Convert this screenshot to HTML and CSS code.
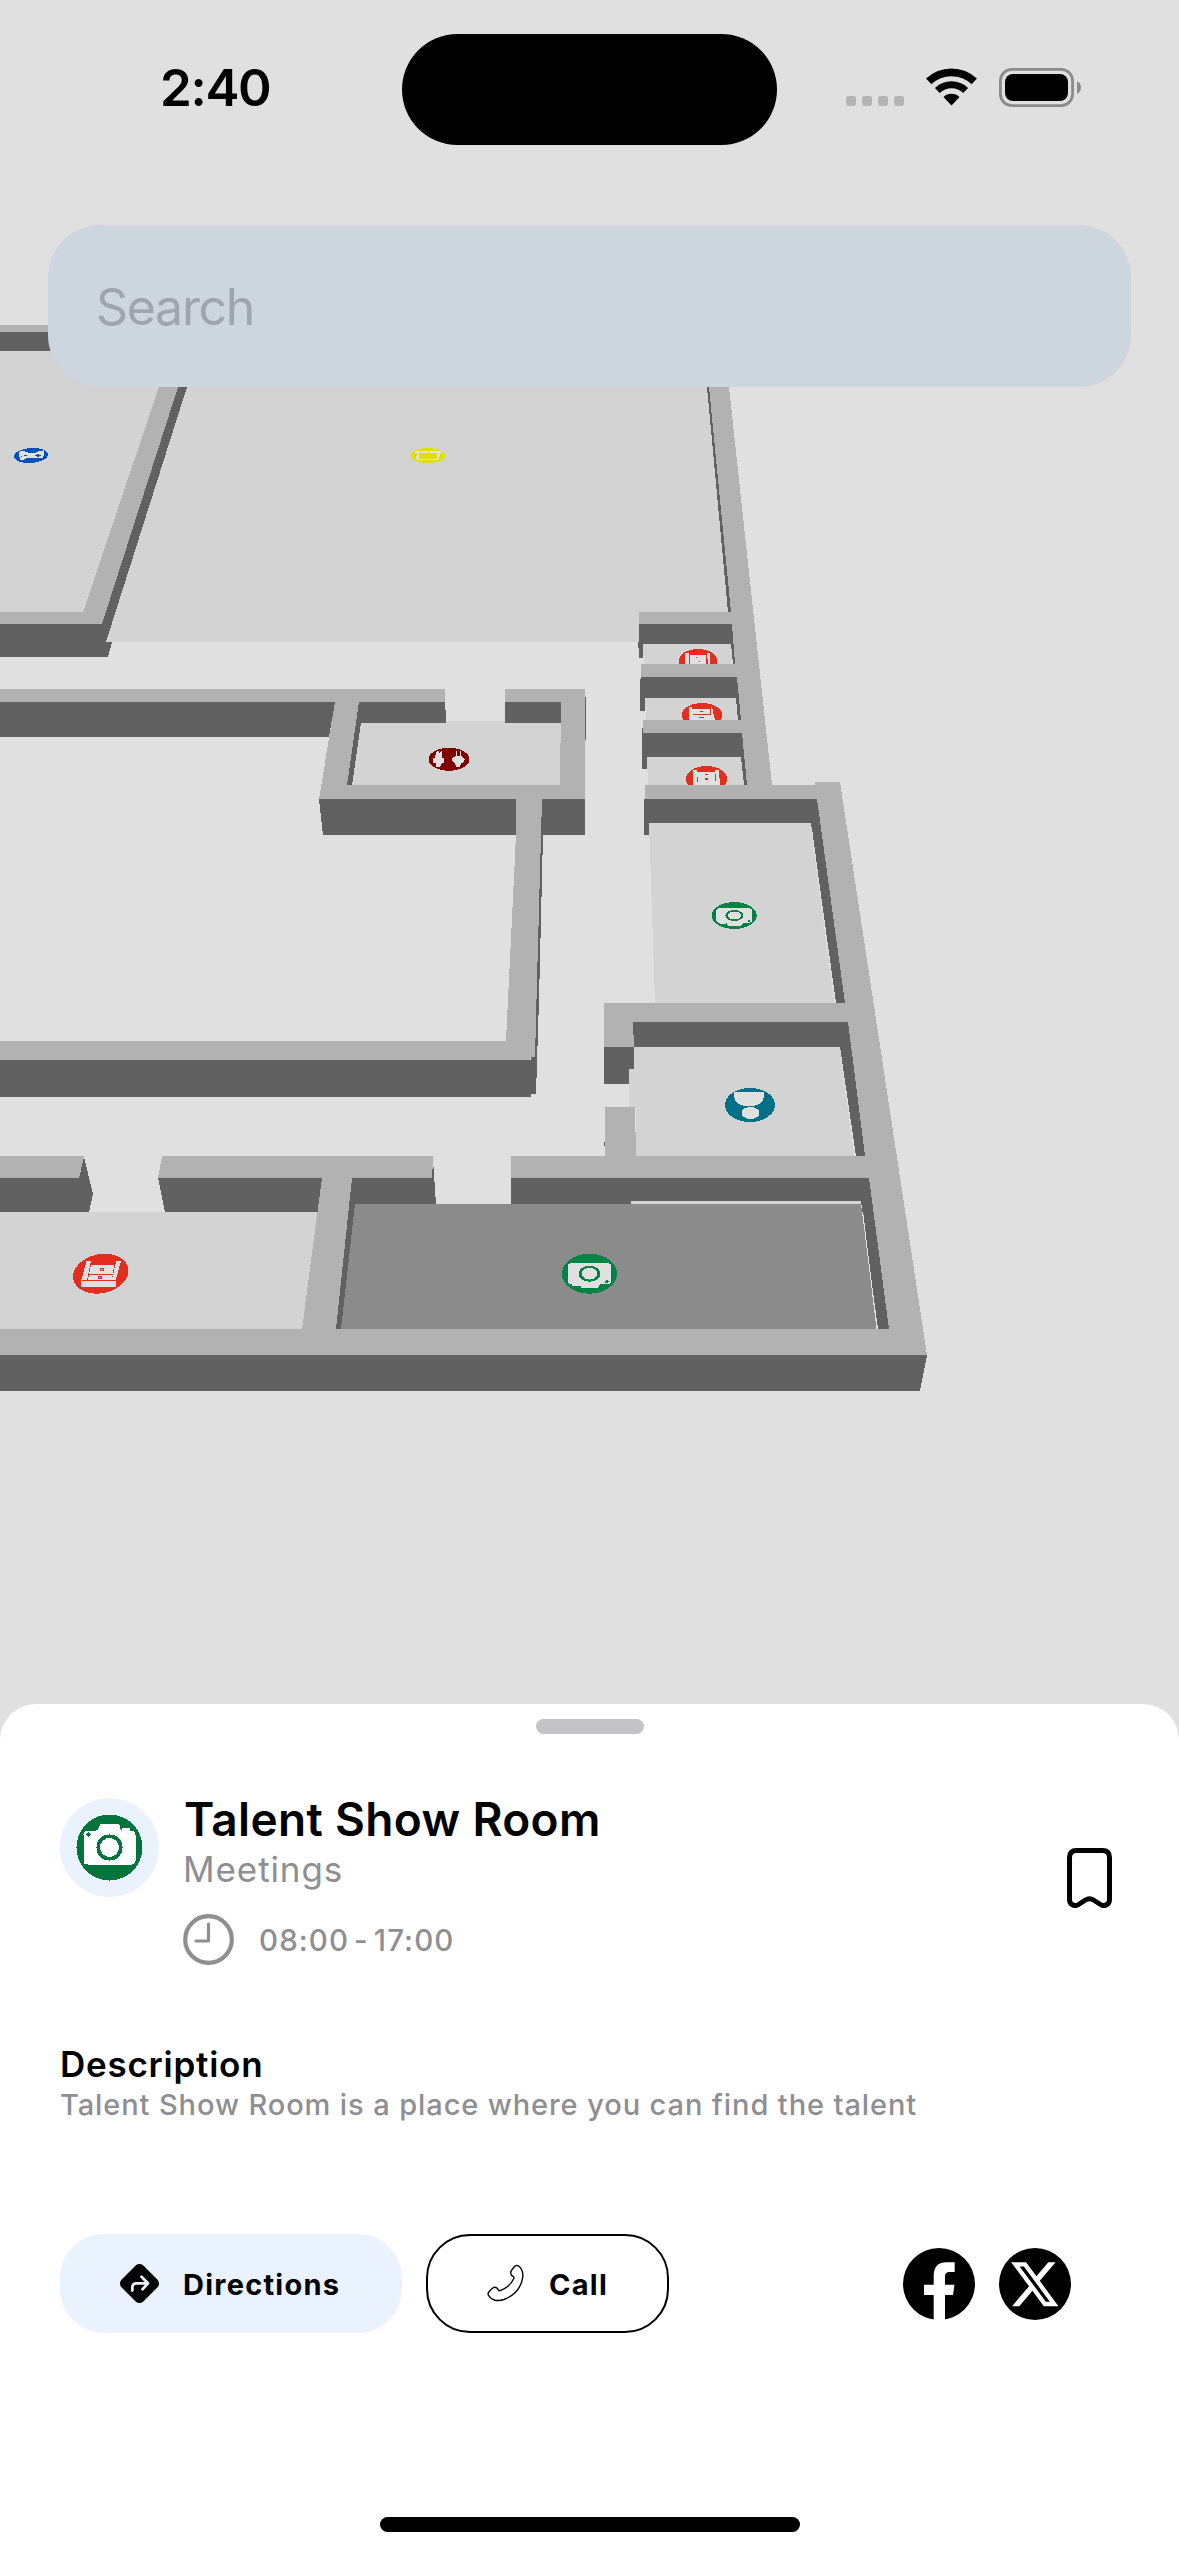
FILE: index.html
```
<!DOCTYPE html>
<html lang="en">
<head>
<meta charset="utf-8">
<title>Talent Show Room</title>
<link rel="stylesheet" href="styles.css">
</head>
<body>
<main class="screen">

  <svg class="map" viewBox="0 0 1179 1740" aria-label="Floor map">
    <defs>
      <g id="camera">
        <path class="glyph" d="M-26-13Q-26-17-22-17H-13L-9.600-24H9.600L12-17V-20H21V-17H22Q26-17 26-13V13Q26 17 22 17H-22Q-26 17-26 13Z"/>
        <circle class="lens" r="11.300"/>
        <circle class="dot" cx="-21" cy="-13" r="2.200"/>
      </g>
      <clipPath id="clip1"><rect x="640" y="640" width="100" height="24"/></clipPath>
      <clipPath id="clip2"><rect x="640" y="690" width="100" height="30"/></clipPath>
      <clipPath id="clip3"><rect x="640" y="750" width="110" height="35"/></clipPath>
    </defs>

    <!-- room floors -->
    <g class="floor">
      <path d="M0 351H172L83 635H0Z"/>
      <path d="M187 387H707L731 612H640V642H106Z"/>
      <path d="M361 723H446V721H505V723H561V786H352Z"/>
      <path d="M643 644H732V664H644Z"/>
      <path d="M645 698H737L739 720H646Z"/>
      <path d="M647 757H741L744 785H648Z"/>
      <path d="M649 823H811L835 1003H655Z"/>
      <path d="M634 1047H840L855 1156H636V1107H629V1068H634Z"/>
      <path d="M631 1201H861V1205H631Z"/>
      <path d="M0 1212H318L302 1329H0Z"/>
    </g>
    <path class="floor-active" d="M354 1204H861L877 1329H341Z"/>

    <!-- wall faces -->
    <g class="side">
      <path d="M0 332H90V351H0Z"/>
      <path d="M178 387H187L106 642H112L108 657H0V624H102Z"/>
      <path d="M707 387H710L731 612H728Z"/>
      <path d="M639 624H733L736 664H733L731 644H643V658H639V648H638V642H639Z"/>
      <path d="M640 679H641V677H737L741 720H738L736 698H645V711H640Z"/>
      <path d="M642 728H643V733H742L747 785H744L741 757H647V769H642Z"/>
      <path d="M644 799H817L845 1003H836L811 823H649V835H644Z"/>
      <path d="M0 702H335L329 737H0Z"/>
      <path d="M359 702H443V696H445L446 723H361L352 785H346Z"/>
      <path d="M505 702H562V723H505Z"/>
      <path d="M584 697H586V740H584Z"/>
      <path d="M319 799H585V835H323Z"/>
      <path d="M541 835H543L539 1000L536 1094H531V1097H0V1060H531Z"/>
      <path d="M604 1047H633V1022H848L865 1156H856L840 1047H634V1069H629V1084H604Z"/>
      <path d="M604 1142H606V1146H604Z"/>
      <path d="M0 1178H79L84 1157L93 1194L89 1212H0Z"/>
      <path d="M158 1178H322L318 1212H165Z"/>
      <path d="M352 1178H432L433 1160L436 1204H355L341 1329H335Z"/>
      <path d="M511 1178H869L889 1329H878L861 1201H631V1204H511Z"/>
      <path d="M0 1355H927L920 1391H0Z"/>
    </g>

    <!-- wall tops -->
    <g class="top">
      <path d="M0 325H90V332H0Z"/>
      <path d="M159 387H178L102 624H0V612H83Z"/>
      <path d="M709 387H729L772 785H815V782H840L927 1355H0V1329H302L322 1178H158L162 1156H433L432 1178H352L336 1329H889L869 1178H511V1156H605V1107H635L636 1156H865L848 1022H633L634 1047H604V1003H845L817 799H645V785H747L742 733H643V720H741L737 677H641V664H735L732 624H639V612H731Z"/>
      <path d="M0 689H445V702H359L347 785H560L561 702H505V689H585V799H542L537 980L535 1057H530V1060H0V1041H506L516 835V799H319L335 702H0Z"/>
      <path d="M0 1156H84L79 1178H0Z"/>
    </g>
    <path class="seam" d="M812 832L835 1003M841 1058L855 1156M863 1215L877 1329"/>

    <!-- room markers -->
    <ellipse class="blue" cx="31" cy="455.500" rx="17" ry="7.500" transform="rotate(-4 31 455.500)"/>
    <path class="glyph" d="M19.500 451.500Q24 450.500 28 452.500Q33 454 37 452Q42 450 44.500 450.500Q45 454 42.500 457.500Q40 459 36 458H27Q23 461 20.500 460Q18.500 456 19.500 451.500Z"/>
    <path class="blue" d="M24 455H27V456H22V457H21V456H24ZM37 454H39V455H41V456H39V457H37V456H35V455H37Z"/>

    <ellipse class="yellow" cx="428" cy="455.500" rx="17" ry="7.500"/>
    <path class="glyph" d="M415 451H442V453H440L439 460H416L417 453H415Z"/>
    <path class="yellow" d="M419 453H437V459H419ZM428 451H429V453H428Z"/>

    <ellipse class="maroon" cx="449" cy="759.300" rx="20.500" ry="11.500"/>
    <path class="glyph" d="M437 751H439V754L441 751H442V758H444V763H442L440 767H436V763H433V758H435L436 753ZM456 751H457V756H460V751H461V756L465 759L464 762L461 763L460 767H456L455 763L452 761V758L456 756Z"/>

    <g clip-path="url(#clip1)">
      <ellipse class="red" cx="698" cy="661" rx="19.300" ry="12"/>
      <path class="glyph" d="M685 653H689V664H685ZM690 655H706V664H690ZM707 653H710V664H708Z"/>
      <path class="red" d="M696 657H697V658H696ZM699 661H700V662H699Z"/>
    </g>
    <g clip-path="url(#clip2)">
      <ellipse class="red" cx="702" cy="715" rx="20" ry="12"/>
      <path class="glyph" d="M689 707H712L715 720H689Z"/>
      <path class="red" d="M692 707H711V709H692ZM710 709H711V715H710ZM693 714H711V715H693ZM700 711H703V712H700ZM699 717H704V718H699Z"/>
    </g>
    <g clip-path="url(#clip3)">
      <ellipse class="red" cx="706.500" cy="779" rx="20.500" ry="13"/>
      <path class="glyph" d="M693 770H697V772H715V770H719L720 785H693Z"/>
      <path class="red" d="M697 777H698V782H697ZM715 774H716V781H715ZM705 774H708V775H705ZM705 778H708V780H705Z"/>
    </g>

    <g class="green" transform="translate(734.300 915.500)">
      <ellipse rx="22.500" ry="13.500"/>
      <use href="#camera" transform="scale(-.69 -.42)"/>
    </g>
    <g class="green" transform="translate(589.500 1273.700)">
      <ellipse rx="27.500" ry="20"/>
      <use href="#camera" transform="scale(-.83 -.61)"/>
    </g>

    <ellipse class="teal" cx="750" cy="1105" rx="25" ry="17"/>
    <path class="glyph" d="M734 1092H764V1097Q762 1106 749 1106.500Q736 1106 734 1097Z"/>
    <ellipse class="glyph" cx="750.500" cy="1113" rx="8.800" ry="6.200"/>

    <ellipse class="red" cx="100.700" cy="1273.700" rx="28" ry="19.500" transform="rotate(-12 100.700 1273.700)"/>
    <path class="glyph" d="M86.500 1261H91L87 1281H116V1287H81V1281ZM116.300 1261H121L115.500 1281H111.500ZM91 1265H114L112 1279.600H88Z"/>
    <path class="red" d="M88 1274H113V1275.200H88ZM82 1280H116V1281.200H82ZM100 1268H104V1271H100ZM98 1276H102V1279H98Z"/>
    <path class="glyph" d="M101 1269H103V1270H101ZM99 1277H100V1278H99Z"/>
  </svg>

  <div class="overlay">
    <header class="status">
      <time class="clock">2:40</time>
      <div class="island"></div>
      <div class="indicators">
        <div class="signal"><i></i><i></i><i></i><i></i></div>
        <svg class="wifi" viewBox="0 0 51 38">
          <path d="M2.700 13.400A33.200 33.200 0 0 1 48.300 13.400" stroke-width="7.700"/>
          <path d="M11.300 22.500A20.700 20.700 0 0 1 39.700 22.500" stroke-width="7"/>
          <path class="wedge" d="M25.500 37.500L17.500 29A11.700 11.700 0 0 1 33.500 29Z"/>
        </svg>
        <svg class="battery" viewBox="0 0 82 39">
          <rect class="shell" x="1.400" y="1.400" width="72.200" height="36.200" rx="11.500"/>
          <rect x="6" y="6" width="63" height="27" rx="8"/>
          <path class="nub" d="M78 13.300Q82 15 82 19.500Q82 24 78 25.700Z"/>
        </svg>
      </div>
    </header>

    <div class="search">Search</div>

    <section class="sheet">
      <div class="handle"></div>

      <div class="place">
        <svg class="avatar" viewBox="-49.500 -49.500 99 99">
          <circle class="halo" r="49.500"/>
          <g class="badge">
            <circle r="33"/>
            <path class="glyph" d="M-26-13Q-26-17-22-17H-14Q-11.500-17-11-19L-10-22Q-9.500-24-8-24H8Q9.500-24 10-22L11-19Q12-17 12.500-17V-18.500Q12.500-20 14-20H19.500Q21-20 21-17H22Q26-17 26-13V13Q26 17 22 17H-22Q-26 17-26 13Z"/>
            <circle class="lens" r="11.300"/>
            <circle class="dot" cx="-21" cy="-13" r="2.200"/>
          </g>
        </svg>
        <div class="info">
          <h1 class="name">Talent Show Room</h1>
          <p class="category">Meetings</p>
          <div class="hours">
            <svg class="hours-icon" viewBox="0 0 51 51">
              <circle cx="25.500" cy="25.500" r="23.300" stroke-width="4.200"/>
              <path d="M25.500 10V27H13" stroke-width="3.200"/>
            </svg>
            <span>08:00 - 17:00</span>
          </div>
        </div>
        <svg class="bookmark" viewBox="0 0 45 60">
          <path d="M9.500 2.500H35.500Q42.500 2.500 42.500 9.500V51.500C42.500 56.500 37.500 59 33.500 56.500L26.500 52Q22.500 49.500 18.500 52L11.500 56.500C7.500 59 2.500 56.500 2.500 51.500V9.500Q2.500 2.500 9.500 2.500Z"/>
        </svg>
      </div>

      <div class="about">
        <h2 class="about-title">Description</h2>
        <p class="about-text">Talent Show Room is a place where you can find the talent</p>
      </div>

      <div class="actions">
        <div class="button primary">
          <svg class="button-icon" viewBox="0 0 39 39">
            <rect x="4" y="4" width="31" height="31" rx="5.800" transform="rotate(45 19.500 19.500)"/>
            <path class="arrow" d="M12.300 26.500V23.500Q12.300 19.300 16.500 19.300H27.500M21.500 12.800L28 19.300L22.500 25.300"/>
          </svg>
          <span>Directions</span>
        </div>
        <div class="button outline">
          <svg class="button-icon" viewBox="0 0 39 39">
            <path class="phone" d="M29 2Q30.700 .800 32.300 1.800Q37.500 5.500 36.800 13Q34.500 29 18 35.500Q13 37 9 36.200Q4.500 35 2.300 31Q1.600 29.500 2.800 28Q4.500 26 6.800 24Q8.800 22.700 10.700 23.800Q11.500 24.300 12.300 26Q13 27 14.200 26.600Q24 23 27.800 14.500Q28.300 13 27 12.300Q25 11.500 24.800 9.500Q24.500 8 25.500 6.500Q27 4 29 2Z"/>
          </svg>
          <span>Call</span>
        </div>
        <div class="social">
          <svg class="social-icon" viewBox="0 0 72 72">
            <circle cx="36" cy="36" r="36"/>
            <path class="mark" d="M30.700 72V47H21V36.700H30.700V28C30.700 18.500 35.500 14.300 43.500 14.300H51.700V24H47C43 24 42 26 42 29V36.700H51.500L50 47H42V72Z"/>
          </svg>
          <svg class="social-icon" viewBox="0 0 72 72">
            <circle cx="36" cy="36" r="36"/>
            <path class="mark" transform="translate(9.400 9.200) scale(2.190 2.250)" d="M18.244 2.250h3.308l-7.227 8.260 8.502 11.240H16.170l-5.214-6.817L4.990 21.750H1.680l7.730-8.835L1.254 2.250H8.080l4.713 6.231zm-1.161 17.520h1.833L7.084 4.126H5.117z"/>
          </svg>
        </div>
      </div>

      <div class="home-indicator"></div>
    </section>
  </div>
</main>
</body>
</html>
```
FILE: styles.css
```
* { box-sizing: border-box; margin: 0; padding: 0; }

body {
  font-family: Inter, "Liberation Sans", sans-serif;
  color: #000;
  background: #e0e0e0;
}

svg { display: block; flex: none; }

.screen {
  display: grid;
  width: 1179px;
  height: 2556px;
  overflow: hidden;
  background: #e0e0e0;
}

.map, .overlay { grid-area: 1 / 1; }

/* Map */
.map {
  width: 1179px;
  height: 1740px;
  shape-rendering: crispEdges;
}
.floor { fill: #d3d3d3; }
.floor-active { fill: #8b8b8b; }
.side { fill: #616161; }
.top { fill: #b2b2b2; }
.seam { fill: none; stroke: #e0e0e0; stroke-width: 1; }
.glyph { fill: #e0e0e0; }
.blue { fill: #0050bd; }
.yellow { fill: #e1de00; }
.maroon { fill: #800000; }
.red { fill: #e22e1f; }
.teal { fill: #007089; }
.green { fill: #008344; color: #008344; }
.lens { fill: none; stroke: currentColor; stroke-width: 3.5; }
.dot { fill: currentColor; }

.overlay {
  display: flex;
  flex-direction: column;
  height: 2556px;
}

/* Status bar */
.status {
  display: grid;
  grid-template-columns: 402px 375px 1fr;
  align-items: center;
  height: 177px;
}
.clock {
  margin-bottom: 2px;
  padding-left: 160px;
  font-size: 51px;
  font-weight: 600;
  line-height: 60px;
  letter-spacing: -1.3px;
}
.island {
  height: 111px;
  margin-top: 1px;
  border-radius: 56px;
  background: #000;
}
.indicators {
  display: flex;
  align-items: flex-end;
  height: 39px;
  margin-bottom: 2px;
  padding-left: 69px;
}
.signal { display: flex; gap: 6px; margin-right: 22px; padding-bottom: 1px; }
.signal i { width: 10px; height: 10px; border-radius: 3px; background: #b3b3b3; }
.wifi { width: 51px; height: 38px; margin-right: 22px; margin-bottom: 1px; fill: none; stroke: #000; }
.wifi .wedge { fill: #000; stroke: none; }
.battery { width: 82px; height: 39px; }
.battery .shell { fill: none; stroke: #8b8b8b; stroke-width: 2.8; }
.battery .nub { fill: #8b8b8b; }

.search {
  flex: none;
  height: 162px;
  margin: 48px 48px 0;
  padding-left: 48px;
  border-radius: 52px;
  background: #cdd5df;
  color: #9fa5ad;
  font-size: 50px;
  line-height: 165px;
  letter-spacing: -1.3px;
}

/* Bottom sheet */
.sheet {
  display: flex;
  flex-direction: column;
  height: 852px;
  margin-top: auto;
  padding: 15px 60px 24px;
  border-radius: 36px 36px 0 0;
  background: #fff;
}
.handle {
  align-self: center;
  width: 108px;
  height: 15px;
  border-radius: 7.5px;
  background: #c4c4c7;
}
.place {
  display: flex;
  gap: 24px;
  height: 175px;
  margin-top: 56px;
  padding-right: 7px;
}
.avatar { width: 99px; height: 99px; margin-top: 8px; }
.avatar .halo { fill: #eaf2fe; }
.avatar .glyph { fill: #fff; }
.badge { fill: #00743a; color: #00743a; shape-rendering: crispEdges; }
.info { flex: 1; }
.name {
  font-size: 46px;
  font-weight: 600;
  line-height: 58px;
  letter-spacing: .35px;
  text-indent: 1px;
}
.category {
  color: #8e8e93;
  font-size: 35px;
  line-height: 43px;
  letter-spacing: .9px;
}
.hours {
  display: flex;
  align-items: center;
  gap: 25px;
  height: 51px;
  margin-top: 23px;
  color: #8e8e93;
  font-size: 29.5px;
  font-weight: 500;
  letter-spacing: 1.1px;
  word-spacing: -4px;
}
.hours-icon {
  width: 51px;
  height: 51px;
  fill: none;
  stroke: #8e8e93;
  stroke-linecap: round;
  stroke-linejoin: round;
}
.bookmark {
  align-self: center;
  width: 45px;
  height: 60px;
  fill: none;
  stroke: #000;
  stroke-width: 5;
}

.about { margin-top: 78px; }
.about-title {
  font-size: 35px;
  font-weight: 600;
  line-height: 43px;
  letter-spacing: .75px;
}
.about-text {
  color: #8e8e93;
  font-size: 29px;
  font-weight: 500;
  line-height: 37px;
  letter-spacing: .9px;
  white-space: nowrap;
}

.actions {
  display: flex;
  align-items: center;
  gap: 24px;
  margin-top: 111px;
}
.button {
  display: flex;
  align-items: center;
  gap: 24px;
  height: 99px;
  border-radius: 44px;
  font-size: 29px;
  font-weight: 700;
  letter-spacing: 1.25px;
}
.button span { padding-top: 1px; }
.primary { width: 342px; padding-left: 60px; background: #eaf2fe; }
.outline { width: 243px; padding-left: 58px; border: 2px solid #000; }
.button-icon { width: 39px; height: 39px; }
.arrow {
  fill: none;
  stroke: #eaf2fe;
  stroke-width: 2.8;
  stroke-linecap: round;
  stroke-linejoin: round;
}
.phone { fill: none; stroke: #000; stroke-width: 1.4; }
.social { display: flex; gap: 24px; margin-left: auto; padding-right: 48px; }
.social-icon { width: 72px; height: 72px; }
.mark { fill: #fff; }

.home-indicator {
  align-self: center;
  width: 420px;
  height: 15px;
  margin-top: auto;
  border-radius: 7.5px;
  background: #000;
}
```
